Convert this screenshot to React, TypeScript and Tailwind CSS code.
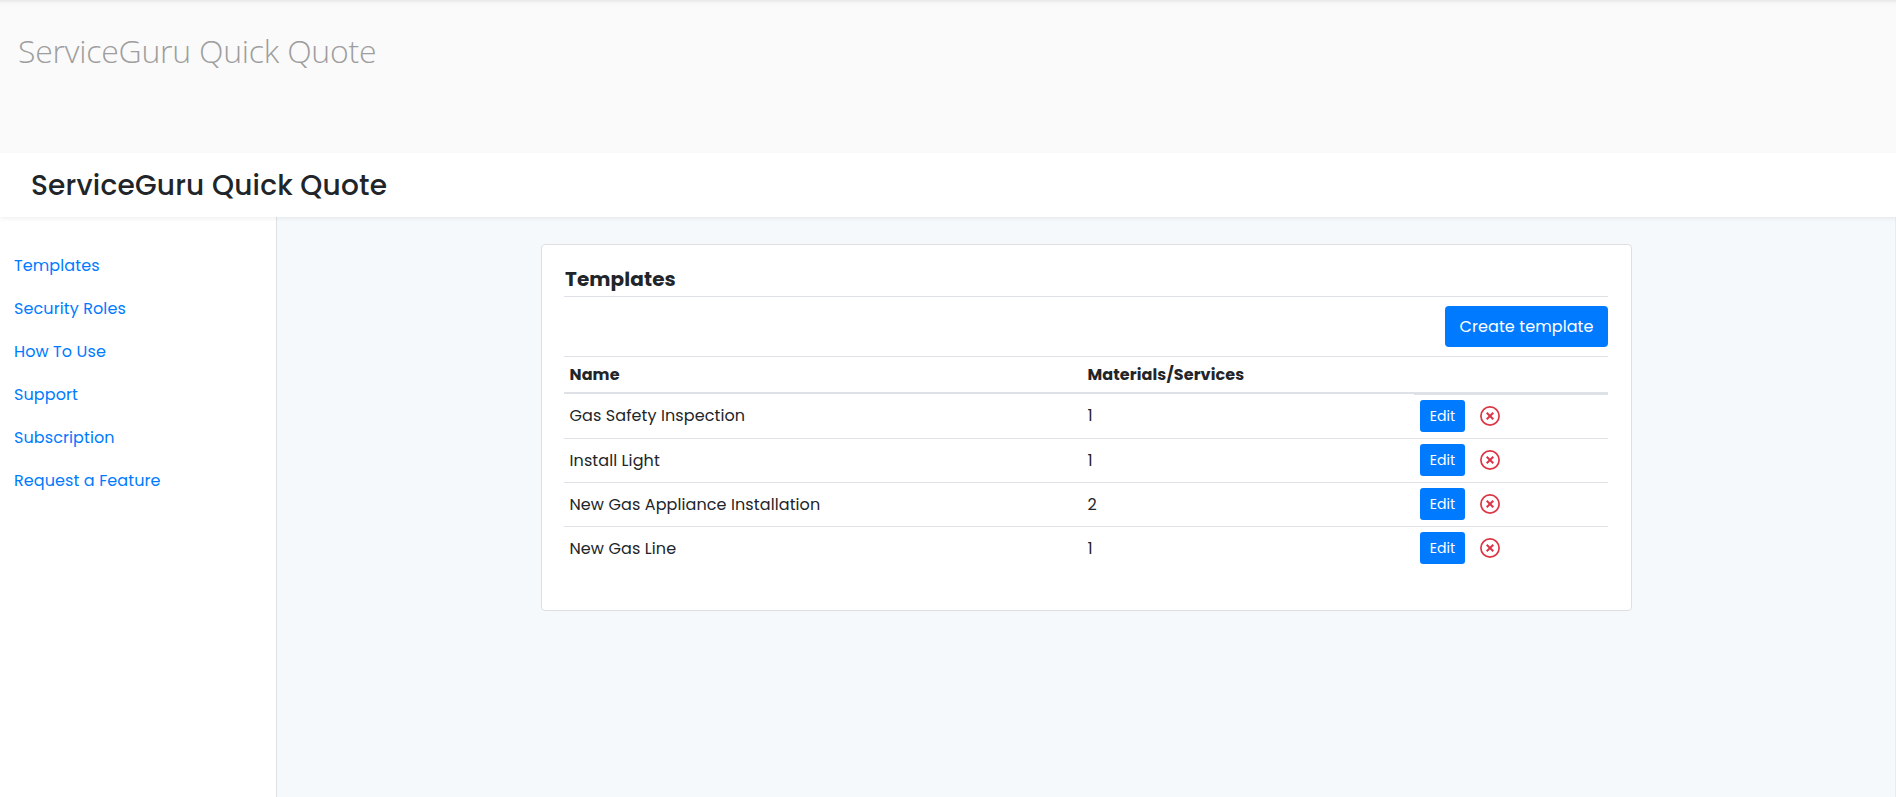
interface Template {
  id: number
  name: string
  items: number
}

const NAV_LINKS = ['Templates', 'Security Roles', 'How To Use', 'Support', 'Subscription', 'Request a Feature']

const TEMPLATES: Template[] = [
  { id: 1, name: 'Gas Safety Inspection', items: 1 },
  { id: 2, name: 'Install Light', items: 1 },
  { id: 3, name: 'New Gas Appliance Installation', items: 2 },
  { id: 4, name: 'New Gas Line', items: 1 },
]

function DeleteIcon() {
  return (
    <svg width="20" height="20" viewBox="0 0 20 20" fill="none" stroke="currentColor">
      <circle cx="10" cy="10" r="9.1" strokeWidth="1.7" />
      <path d="M6.7 6.7 13.3 13.3M13.3 6.7 6.7 13.3" strokeWidth="2" />
    </svg>
  )
}

function TemplateRow({ template, first }: { template: Template; first: boolean }) {
  return (
    <div className={`grid h-11 grid-cols-[518px_332px_194px] ${first ? '' : 'border-t border-[#dee2e6]'}`}>
      <div className="flex items-center pl-[5.5px]">{template.name}</div>
      <div className="flex items-center pl-[5.5px]">{template.items}</div>
      <div className={`flex items-start pl-1.5 pt-[5px] ${first ? 'border-t border-[#dee2e6]' : ''}`}>
        <button className="h-8 w-[45px] rounded-[3px] bg-[#007bff] text-sm text-white">Edit</button>
        <button className="mt-1.5 ml-[15px] text-[#dc3545]" aria-label={`Delete ${template.name}`}>
          <DeleteIcon />
        </button>
      </div>
    </div>
  )
}

export default function App() {
  return (
    <div className="flex h-screen flex-col overflow-hidden bg-white font-['Poppins','Inter',sans-serif] text-base tracking-[0.1px] text-[#212529]">
      <div className="h-[153px] shrink-0 bg-[linear-gradient(#e8e8e8,#f6f6f6_3px,#fafafa_7px)] pl-[18px] pt-[27px]">
        <div className="font-['Open_Sans',sans-serif] text-[32px] leading-[48px] font-light tracking-[-0.24px] text-[#9e9e9e]">
          ServiceGuru Quick Quote
        </div>
      </div>

      <header className="relative flex h-16 shrink-0 items-center bg-white pt-0.5 pl-[31px] shadow-[0_2px_4px_rgba(0,0,0,0.06)]">
        <h1 className="text-[28px] font-medium tracking-[0.2px]">ServiceGuru Quick Quote</h1>
      </header>

      <div className="flex min-h-0 flex-1">
        <nav className="w-[277px] shrink-0 border-r border-[#dee2e6] pl-3.5 pt-[27px]">
          {NAV_LINKS.map((link) => (
            <a key={link} href="#" className="flex h-[43px] items-center text-[#007bff]">
              {link}
            </a>
          ))}
        </nav>

        <main className="flex flex-1 items-start border-r border-[#e9ecef] bg-[#f5f9fc] pl-[264px] pt-[27px]">
          <section className="h-[367px] w-[1091px] rounded border border-[#dfdfdf] bg-white pr-[23px] pl-[22px]">
            <h2 className="h-[52px] border-b border-[#dee2e6] pt-5 pl-px text-xl leading-[28px] font-bold">Templates</h2>
            <div className="flex h-[60px] items-center justify-end border-b border-[#dee2e6]">
              <button className="h-[41px] w-[163px] rounded bg-[#007bff] text-white">Create template</button>
            </div>
            <div className="grid h-[37px] grid-cols-[518px_332px_194px] border-b-2 border-[#dee2e6] font-bold">
              <div className="flex items-center pl-[5.5px]">Name</div>
              <div className="flex items-center pl-[5.5px]">Materials/Services</div>
            </div>
            {TEMPLATES.map((template, i) => (
              <TemplateRow key={template.id} template={template} first={i === 0} />
            ))}
          </section>
        </main>
      </div>
    </div>
  )
}
